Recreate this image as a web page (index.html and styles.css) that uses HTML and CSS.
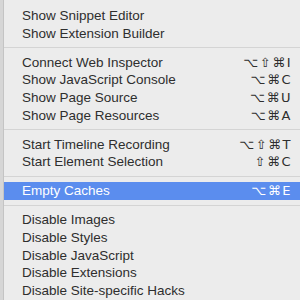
FILE: index.html
```html
<!DOCTYPE html>
<html>
<head>
<meta charset="utf-8">
<link rel="stylesheet" href="styles.css">
</head>
<body>
<div class="menu">
  <div class="item"><span class="label">Show Snippet Editor</span></div>
  <div class="item"><span class="label">Show Extension Builder</span></div>
  <div class="sep"></div>
  <div class="item"><span class="label">Connect Web Inspector</span><span class="key">⌥⇧⌘I</span></div>
  <div class="item"><span class="label">Show JavaScript Console</span><span class="key">⌥⌘C</span></div>
  <div class="item"><span class="label">Show Page Source</span><span class="key">⌥⌘U</span></div>
  <div class="item"><span class="label">Show Page Resources</span><span class="key">⌥⌘A</span></div>
  <div class="sep"></div>
  <div class="item"><span class="label">Start Timeline Recording</span><span class="key">⌥⇧⌘T</span></div>
  <div class="item"><span class="label">Start Element Selection</span><span class="key">⇧⌘C</span></div>
  <div class="sep"></div>
  <div class="item active"><span class="label">Empty Caches</span><span class="key">⌥⌘E</span></div>
  <div class="sep"></div>
  <div class="item"><span class="label">Disable Images</span></div>
  <div class="item"><span class="label">Disable Styles</span></div>
  <div class="item"><span class="label">Disable JavaScript</span></div>
  <div class="item"><span class="label">Disable Extensions</span></div>
  <div class="item"><span class="label">Disable Site-specific Hacks</span></div>
</div>
</body>
</html>
```

FILE: styles.css
```css
html, body {
  margin: 0;
  padding: 0;
  background: #d6d6d6;
  height: 300px;
  overflow: hidden;
}
.menu {
  margin-left: 3px;
  border-left: 1px solid #c4c4c4;
  background: #ececec;
  height: 300px;
  padding-top: 6.6px;
  box-sizing: border-box;
  font-family: "Liberation Sans", Arial, sans-serif;
  font-size: 13.5px;
  color: #2e2e2e;
}
.item {
  height: 17.7px;
  display: flex;
  align-items: center;
  justify-content: space-between;
  padding: 0 8px 0 18px;
  white-space: nowrap;
}
.item.active {
  background: #5b8dee;
  color: #ffffff;
}
.key {
  font-family: "DejaVu Sans", "Liberation Sans", sans-serif;
  font-size: 13px;
  letter-spacing: 1.5px;
}
.sep {
  height: 11.3px;
  display: flex;
  align-items: center;
}
.sep::before {
  content: "";
  display: block;
  width: 100%;
  height: 1px;
  background: #d4d4d4;
}
```
